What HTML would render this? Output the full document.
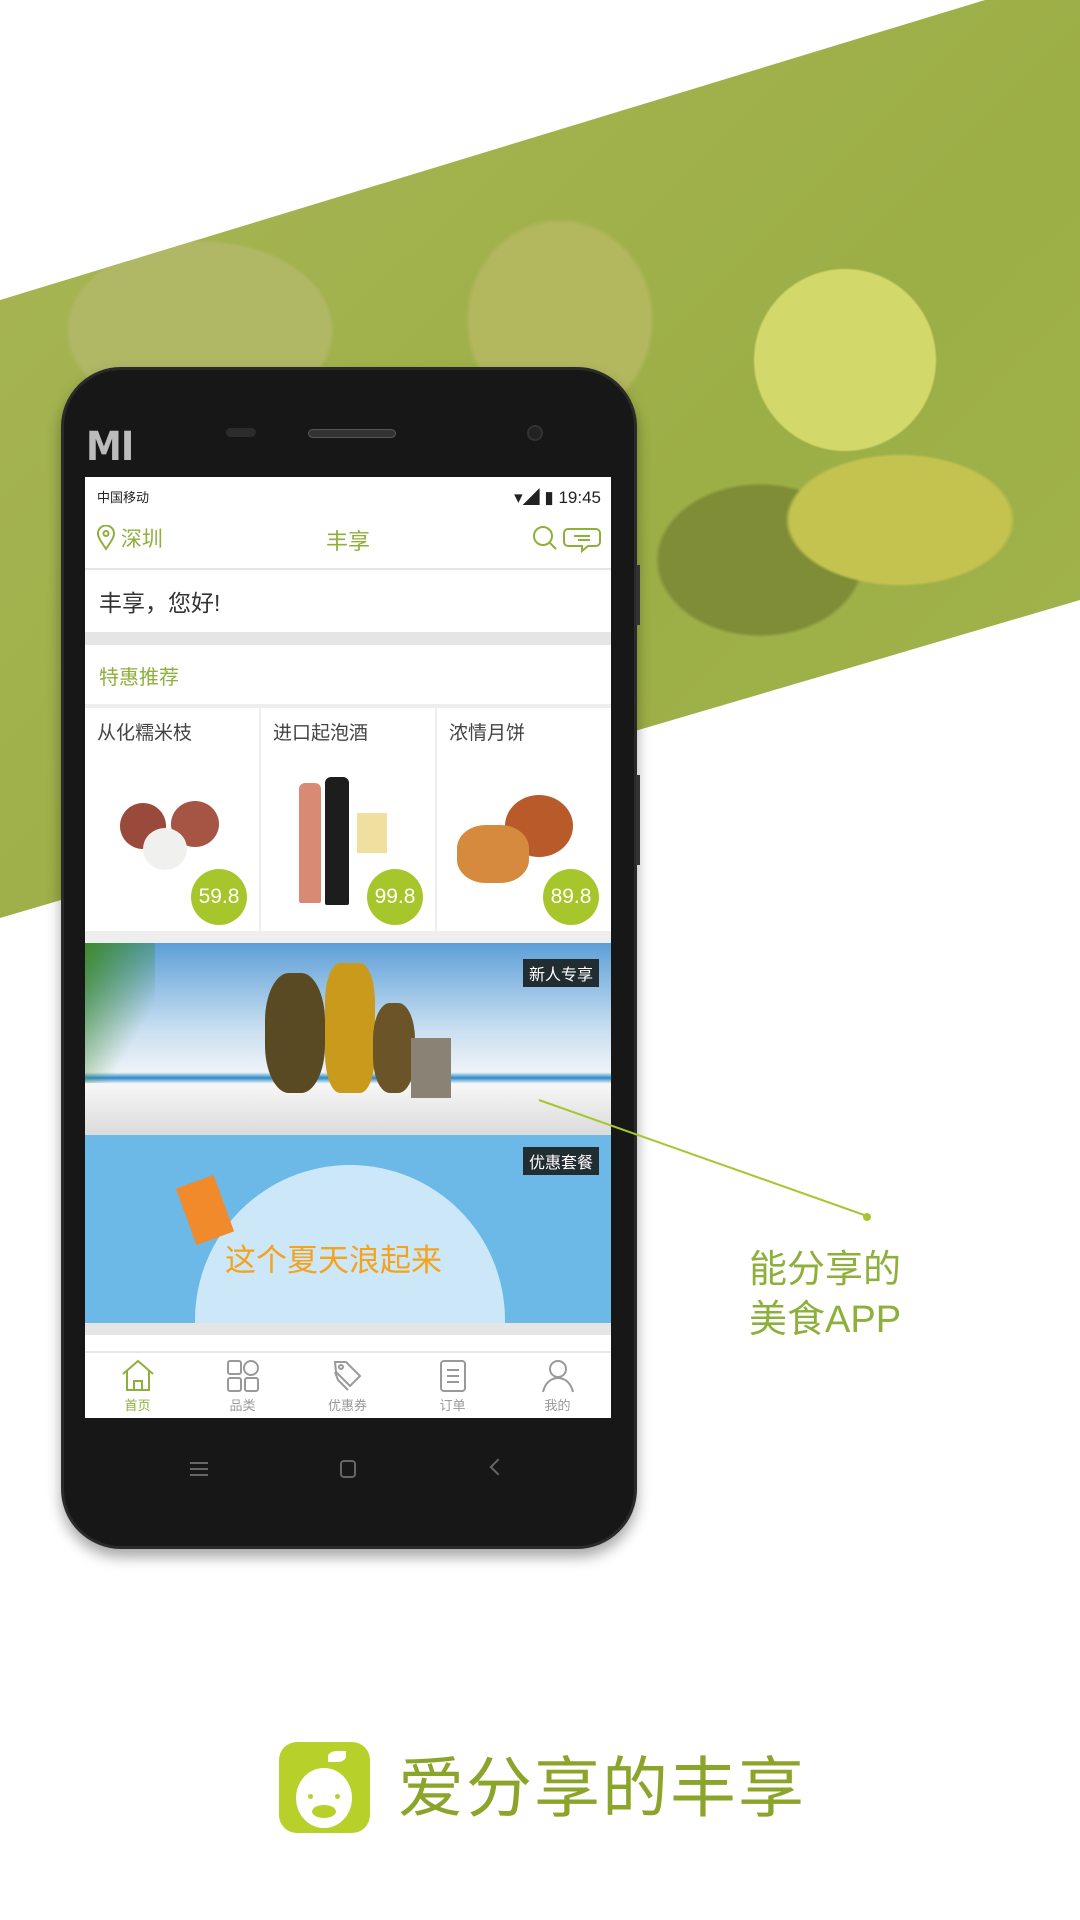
<!DOCTYPE html>
<html><head><meta charset="utf-8"><style>
*{margin:0;padding:0;box-sizing:border-box}
body{width:1080px;height:1920px;background:#fff;position:relative;overflow:hidden;font-family:"Liberation Sans","Noto Sans CJK SC",sans-serif}
.abs{position:absolute}
.band{left:0;top:0;width:1080px;height:920px;clip-path:polygon(0 300px,985px 0,1080px 0,1080px 600px,0 918px);
background:radial-gradient(circle at 845px 360px,#d2d86a 0 90px,transparent 92px),radial-gradient(ellipse at 900px 520px,#c4c350 0 110px,transparent 115px),radial-gradient(ellipse at 760px 560px,#7f8d36 0 100px,transparent 105px),radial-gradient(ellipse at 560px 320px,#b3b75e 0 90px,transparent 95px),radial-gradient(ellipse at 200px 330px,#b0b765 0 130px,transparent 135px),linear-gradient(135deg,#a8b655,#9cae46 60%,#a3b44c)}
.phone{left:61px;top:367px;width:576px;height:1182px;background:#171717;border-radius:60px;box-shadow:0 8px 14px rgba(0,0,0,.35);border:3px solid #2a2a2a}
.screen{left:85px;top:477px;width:526px;height:941px;background:#fff;overflow:hidden}
.g{color:#8db03a}
.card{position:absolute;top:231px;width:174px;height:223px;background:#fff}
.card .t{position:absolute;left:12px;top:10px;font-size:19px;color:#444}
.price{position:absolute;right:12px;bottom:6px;width:56px;height:56px;border-radius:50%;background:#a7c62c;color:#fff;font-size:21px;text-align:center;line-height:56px}
.tab{position:absolute;top:0;width:105px;text-align:center;font-size:13px;color:#999}
.tab svg{display:block;margin:6px auto 2px}
.tag{position:absolute;right:12px;background:#222d31;color:#fff;font-size:16px;padding:2px 6px}
</style></head><body>
<div class="abs band"></div>
<div class="abs phone">
 <div class="abs" style="left:22px;top:54px;font-size:40px;font-weight:bold;color:#bbb;letter-spacing:-1px;font-family:'DejaVu Sans Condensed','DejaVu Sans',sans-serif">MI</div>
 <div class="abs" style="left:162px;top:58px;width:30px;height:9px;border-radius:5px;background:#2c2c2c"></div>
 <div class="abs" style="left:244px;top:59px;width:88px;height:9px;border-radius:5px;background:#333;border:1px solid #555"></div>
 <div class="abs" style="left:463px;top:55px;width:16px;height:16px;border-radius:50%;background:#222;border:2px solid #333"></div>
 <div class="abs" style="left:126px;top:1092px;width:18px;height:14px;border-top:2px solid #666;border-bottom:2px solid #666"></div>
 <div class="abs" style="left:126px;top:1098px;width:18px;height:2px;background:#666"></div>
 <div class="abs" style="left:276px;top:1090px;width:16px;height:18px;border:2px solid #666;border-radius:4px"></div>
 <div class="abs" style="left:428px;top:1091px;width:12px;height:12px;border-left:2px solid #666;border-bottom:2px solid #666;transform:rotate(45deg)"></div>
</div>
<div class="abs" style="left:636px;top:565px;width:4px;height:60px;background:#333"></div>
<div class="abs" style="left:636px;top:775px;width:4px;height:90px;background:#333"></div>
<div class="abs screen">
 <div class="abs" style="left:12px;top:10px;font-size:13px;color:#222">中国移动</div>
 <div class="abs" style="right:10px;top:6px;font-size:17px;color:#222">▾◢ ▮ 19:45</div>
 <div class="abs g" style="left:12px;top:46px;font-size:21px"><svg width="18" height="26" viewBox="0 0 18 26" style="vertical-align:-5px"><path d="M9 24C3 15 1 12 1 8.5A8 8 0 0 1 17 8.5C17 12 15 15 9 24Z" fill="none" stroke="#8db03a" stroke-width="2"/><circle cx="9" cy="8.5" r="2.5" fill="none" stroke="#8db03a" stroke-width="2"/></svg> 深圳</div>
 <div class="abs g" style="left:0;width:526px;text-align:center;top:47px;font-size:22px">丰享</div>
 <svg class="abs" style="left:447px;top:48px" width="80" height="28" viewBox="0 0 80 28"><circle cx="11" cy="11" r="9" fill="none" stroke="#8db03a" stroke-width="2"/><path d="M18 18l6 6" stroke="#8db03a" stroke-width="2"/><path d="M36 4h28a4 4 0 0 1 4 4v9a4 4 0 0 1-4 4h-8l-6 5v-5h-14a4 4 0 0 1-4-4V8a4 4 0 0 1 4-4zM42 11h16M46 15h12" fill="none" stroke="#8db03a" stroke-width="2"/></svg>
 <div class="abs" style="left:0;top:91px;width:526px;height:2px;background:#e6e6e6"></div>
 <div class="abs" style="left:14px;top:107px;font-size:23px;color:#333">丰享，您好!</div>
 <div class="abs" style="left:0;top:155px;width:526px;height:13px;background:#e5e5e5"></div>
 <div class="abs g" style="left:14px;top:184px;font-size:20px">特惠推荐</div>
 <div class="abs" style="left:0;top:227px;width:526px;height:239px;background:#eee"></div>
 <div class="card" style="left:0"><div class="t">从化糯米枝</div>
  <div class="abs" style="left:35px;top:95px;width:46px;height:46px;border-radius:50%;background:#9a4a3a"></div><div class="abs" style="left:86px;top:93px;width:48px;height:46px;border-radius:50%;background:#a65443"></div><div class="abs" style="left:58px;top:120px;width:44px;height:42px;border-radius:50%;background:#f0f0ee"></div>
  <div class="price">59.8</div></div>
 <div class="card" style="left:176px"><div class="t">进口起泡酒</div>
  <div class="abs" style="left:38px;top:75px;width:22px;height:120px;border-radius:6px 6px 2px 2px;background:#d98a74"></div><div class="abs" style="left:64px;top:69px;width:24px;height:128px;border-radius:6px 6px 2px 2px;background:#1d1d1d"></div><div class="abs" style="left:96px;top:105px;width:30px;height:40px;background:#efe0a0"></div>
  <div class="price">99.8</div></div>
 <div class="card" style="left:352px"><div class="t">浓情月饼</div>
  <div class="abs" style="left:68px;top:87px;width:68px;height:62px;border-radius:50%;background:#b85a2a"></div><div class="abs" style="left:20px;top:117px;width:72px;height:58px;border-radius:40%;background:#d58a3e"></div>
  <div class="price">89.8</div></div>
 <div class="abs" style="left:0;top:466px;width:526px;height:190px;background:linear-gradient(180deg,#5d9fd8 0%,#c8def0 45%,#eef3f8 68%,#2a8ac8 71%,#f7f7f7 74%,#dcdcdc 100%)">
  <div class="abs" style="left:180px;top:30px;width:60px;height:120px;border-radius:40%;background:#5a4a24"></div>
  <div class="abs" style="left:240px;top:20px;width:50px;height:130px;border-radius:30%;background:#c99a1c"></div>
  <div class="abs" style="left:288px;top:60px;width:42px;height:90px;border-radius:40%;background:#6b5528"></div>
  <div class="abs" style="left:326px;top:95px;width:40px;height:60px;background:#8a8274"></div>
  <div class="abs" style="left:0;top:0;width:70px;height:140px;background:linear-gradient(120deg,#3e8a2a,transparent 70%)"></div>
  <div class="tag" style="top:16px">新人专享</div></div>
 <div class="abs" style="left:0;top:656px;width:526px;height:2px;background:#ddd"></div>
 <div class="abs" style="left:0;top:658px;width:526px;height:188px;background:#6cb8e6;overflow:hidden">
  <div class="abs" style="left:110px;top:30px;width:310px;height:310px;border-radius:50%;background:#cce8f8"></div>
  <div class="abs" style="left:100px;top:45px;width:40px;height:60px;background:#f08a2a;transform:rotate(-20deg)"></div>
  <div class="abs" style="left:140px;top:100px;font-size:31px;color:#f5a21c;font-family:'WenQuanYi Zen Hei',sans-serif">这个夏天浪起来</div>
  <div class="tag" style="top:12px">优惠套餐</div></div>
 <div class="abs" style="left:0;top:846px;width:526px;height:12px;background:#e5e5e5"></div>
 <div class="abs" style="left:0;top:874px;width:526px;height:2px;background:#e8e8e8"></div>
 <div class="abs" style="left:0;top:876px;width:526px;height:70px">
  <div class="tab" style="left:0;color:#8db03a"><svg width="34" height="34" viewBox="0 0 34 34"><path d="M2 15L17 2l15 13M6 12v19h22V12M13 31v-9h8v9" fill="none" stroke="#8db03a" stroke-width="2"/></svg>首页</div>
  <div class="tab" style="left:105px"><svg width="34" height="34" viewBox="0 0 34 34" fill="none" stroke="#999" stroke-width="2"><rect x="2" y="2" width="13" height="13" rx="2"/><circle cx="25" cy="9" r="7"/><rect x="2" y="19" width="13" height="13" rx="2"/><rect x="19" y="19" width="13" height="13" rx="2"/></svg>品类</div>
  <div class="tab" style="left:210px"><svg width="34" height="34" viewBox="0 0 34 34" fill="none" stroke="#999" stroke-width="2"><path d="M4 3h11l14 14-10 10L5 13zM4 13l3 8 10 10"/><circle cx="10" cy="8" r="2"/></svg>优惠券</div>
  <div class="tab" style="left:315px"><svg width="34" height="34" viewBox="0 0 34 34" fill="none" stroke="#999" stroke-width="2"><rect x="5" y="2" width="24" height="30" rx="3"/><path d="M11 11h12M11 17h12M11 23h12"/></svg>订单</div>
  <div class="tab" style="left:420px"><svg width="34" height="34" viewBox="0 0 34 34" fill="none" stroke="#999" stroke-width="2"><circle cx="17" cy="10" r="8"/><path d="M2 33c2-9 8-14 15-14s13 5 15 14"/></svg>我的</div>
 </div>
</div>
<svg class="abs" style="left:0;top:0" width="1080" height="1920"><line x1="539" y1="1100" x2="867" y2="1216" stroke="#a6c630" stroke-width="2"/><circle cx="867" cy="1217" r="4" fill="#a6c630"/></svg>
<div class="abs" style="left:749px;top:1245px;font-size:38px;line-height:50px;color:#8db03a;font-family:'WenQuanYi Zen Hei',sans-serif">能分享的<br>美食APP</div>
<div class="abs" style="left:279px;top:1742px;width:91px;height:91px;border-radius:18px;background:#b7d12a">
 <div class="abs" style="left:17px;top:26px;width:56px;height:60px;border-radius:50%;background:#fff"></div>
 <div class="abs" style="left:49px;top:9px;width:18px;height:11px;border-radius:50% 0;background:#fff"></div>
 <div class="abs" style="left:33px;top:63px;width:24px;height:13px;border-radius:50%;background:#b7d12a"></div>
 <div class="abs" style="left:29px;top:52px;width:5px;height:5px;border-radius:50%;background:#b7d12a"></div>
 <div class="abs" style="left:56px;top:52px;width:5px;height:5px;border-radius:50%;background:#b7d12a"></div>
</div>
<div class="abs" style="left:398px;top:1752px;font-size:66px;line-height:72px;color:#8aa52a;font-family:'WenQuanYi Zen Hei',sans-serif;letter-spacing:2px">爱分享的丰享</div>
</body></html>
